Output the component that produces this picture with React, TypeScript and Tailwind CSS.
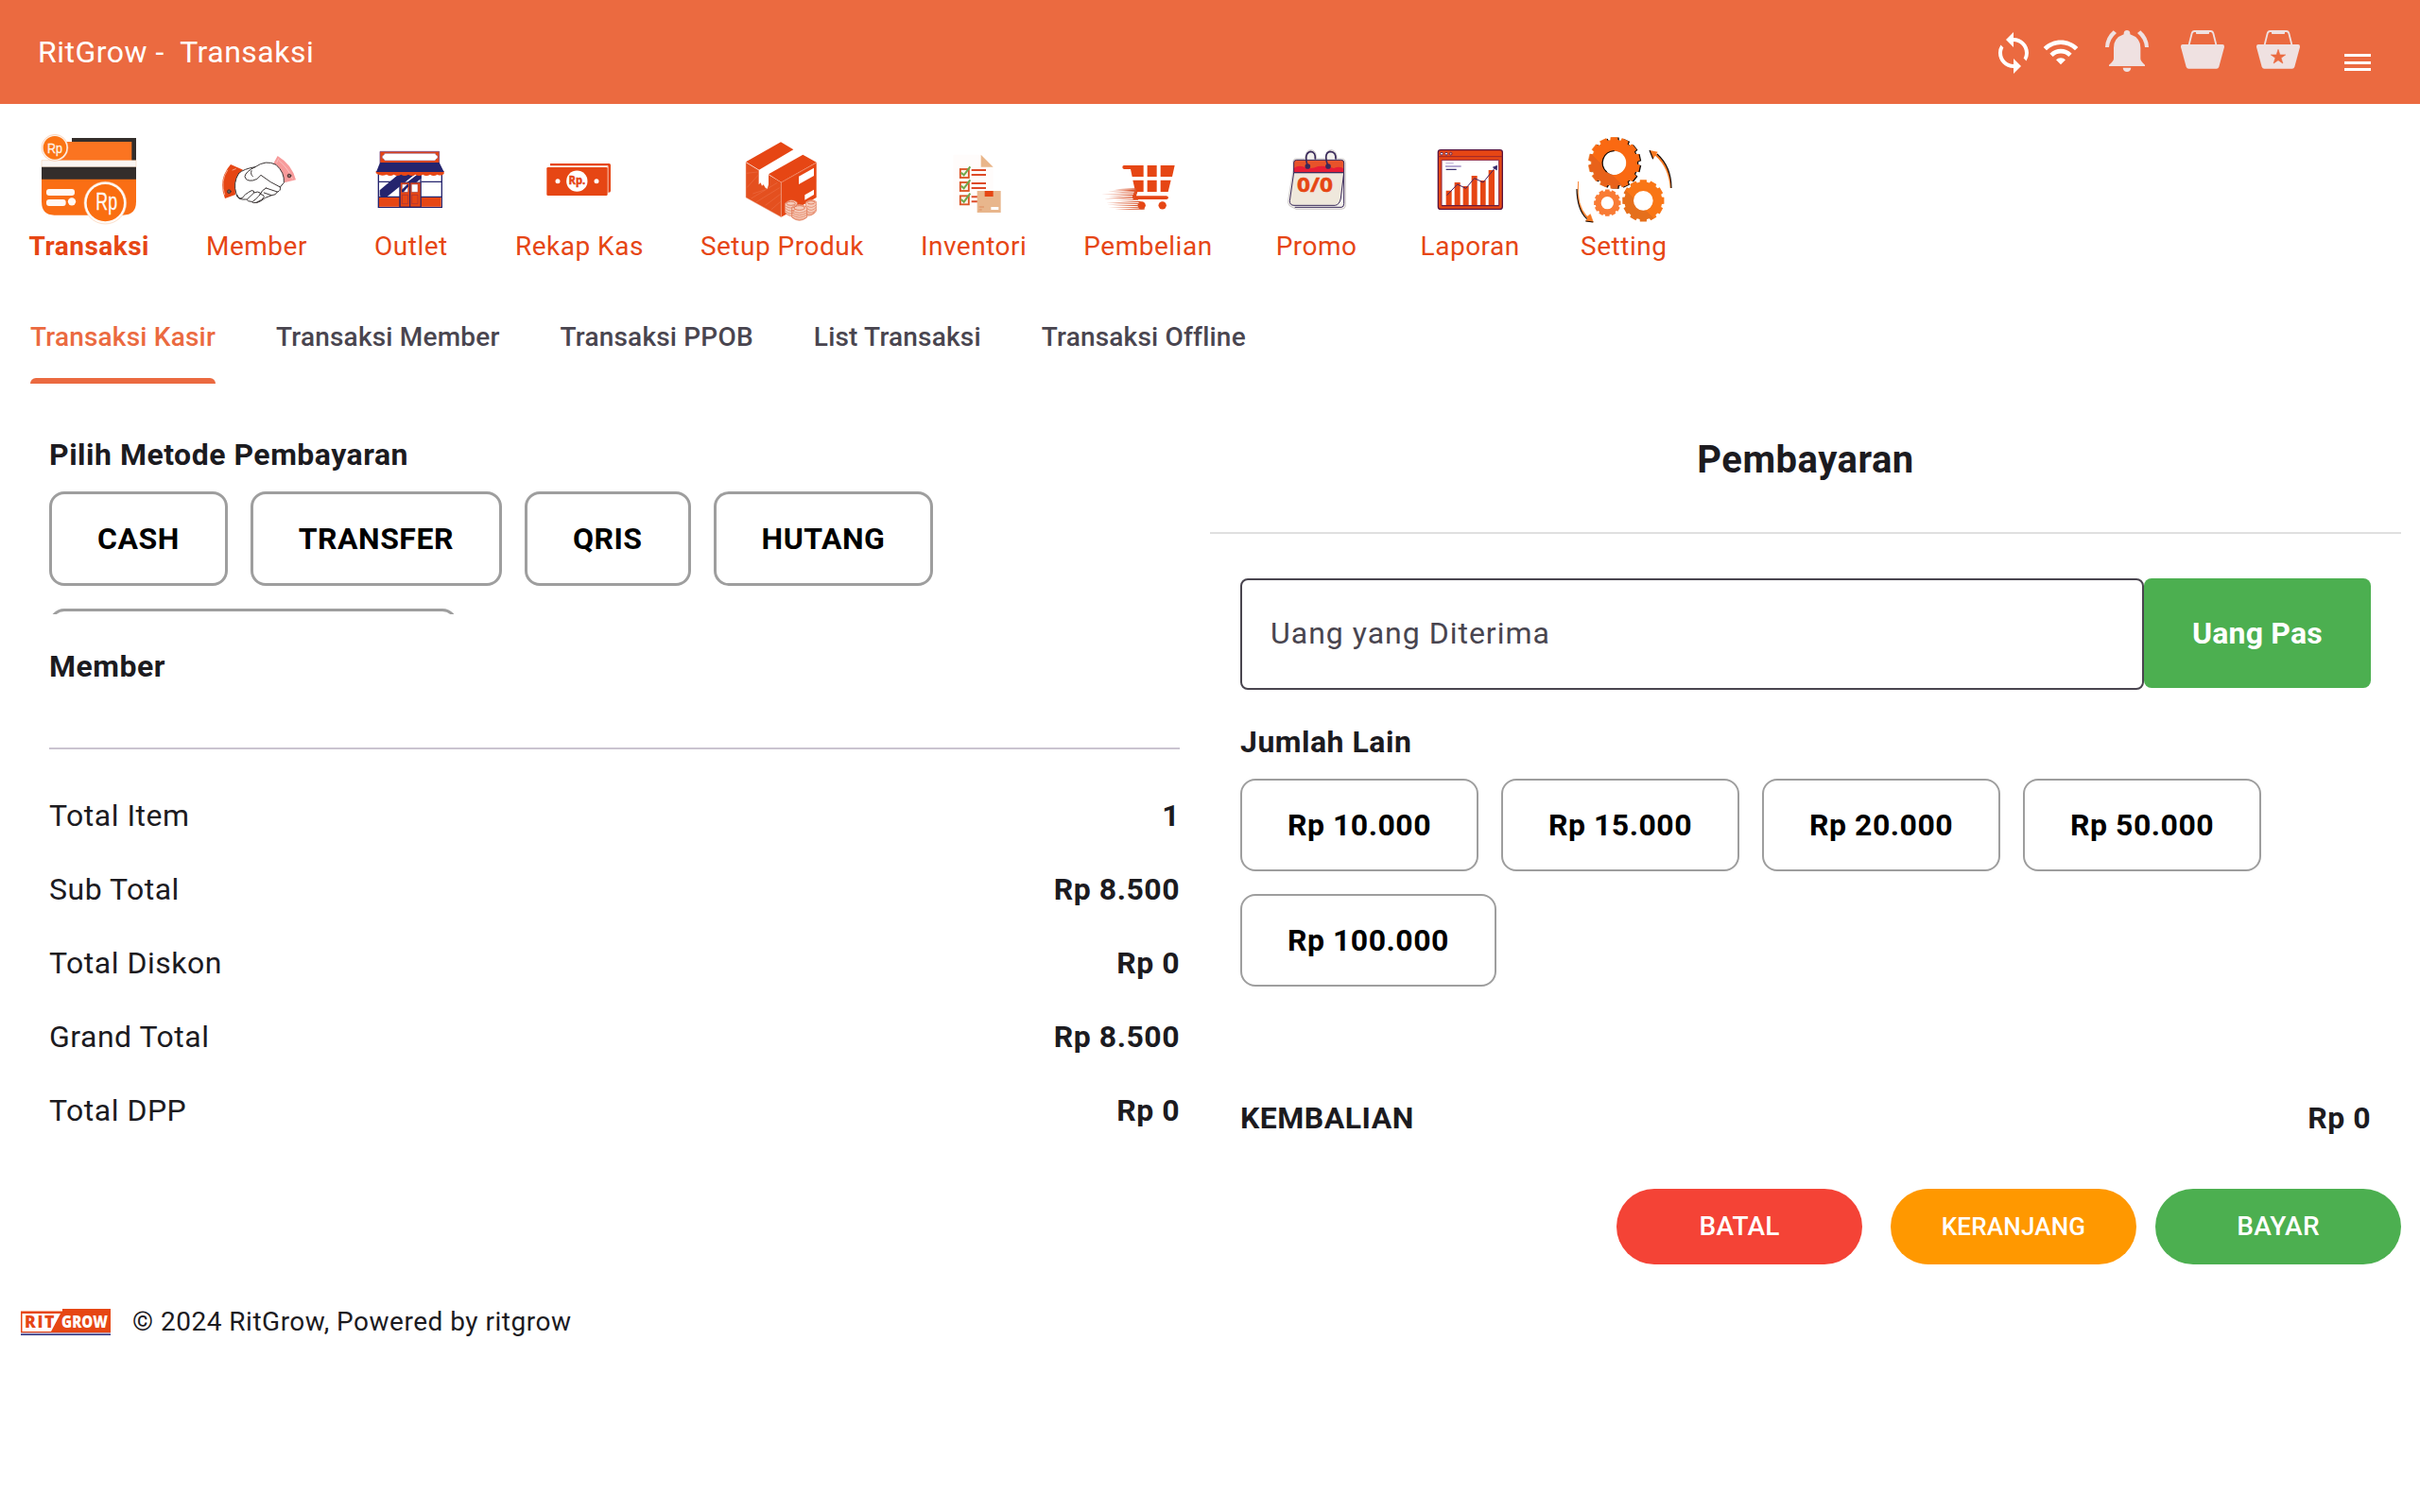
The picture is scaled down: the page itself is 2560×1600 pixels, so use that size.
import React from 'react';
import { MdSync, MdWifi } from 'react-icons/md';

const RED = '#E64614';
const NAVY = '#24246E';

function IconTransaksi() {
  return (
    <svg viewBox="72 30 300 300" className="size-[100px] overflow-visible tracking-normal">
      <path d="M168 48H372V120H168z" fill="#332D2B" />
      <path d="M110 60H358V122H110z" fill="#FB7421" />
      <path d="M72 119H372V140H72z" fill="#FBF6F3" stroke="#F3C9A8" strokeWidth="1.5" />
      <path d="M72 141H372V250Q372 293 330 293H112Q72 293 72 250z" fill="#FA6E14" />
      <path d="M72 140H372V179H72z" fill="#332D2B" />
      <circle cx="114" cy="79" r="42" fill="#FDF3EC" stroke="#F6B98E" strokeWidth="1.5" />
      <circle cx="114" cy="79" r="37" fill="#FB7414" />
      <text x="114" y="95" textAnchor="middle" fontFamily="Liberation Sans" fontSize="44" textLength="48" lengthAdjust="spacingAndGlyphs" fill="#FFF3E8" stroke="#FFF3E8">Rp</text>
      <rect x="87" y="210" width="90" height="21" rx="9" fill="#FFF9F5" />
      <rect x="87" y="243" width="62" height="21" rx="9" fill="#FFF9F5" />
      <circle cx="168" cy="250" r="12.5" fill="#FFF9F5" />
      <circle cx="274" cy="254" r="67" fill="#FFF9F5" stroke="#F8C6A1" strokeWidth="1.5" />
      <circle cx="274" cy="254" r="59" fill="#FA6E10" />
      <text x="278" y="276" textAnchor="middle" fontFamily="Liberation Sans" fontSize="76" textLength="68" lengthAdjust="spacingAndGlyphs" fill="#FFF9F5" stroke="#FFF9F5">Rp</text>
    </svg>
  );
}

function IconMember() {
  return (
    <svg viewBox="605 30 300 300" className="size-[100px]" strokeLinecap="round" strokeLinejoin="round">
      <path d="M823 105Q868 132 881 181L844 190Q842 158 808 132z" fill="#F79A9A" />
      <path d="M828 120Q858 145 870 178M820 126L826 114" fill="none" stroke="#FBD0D0" strokeWidth="2" />
      <path d="M674 132L713 149Q686 172 689 228L656 240Q632 180 674 132z" fill={RED} />
      <path d="M664 150Q640 185 655 228M680 150L690 146" fill="none" stroke="#F7B8A0" strokeWidth="2.5" />
      <path d="M700 160Q715 146 752 140Q786 116 818 133Q846 158 843 190L831 204Q834 216 822 219Q818 230 804 230L784 238Q770 250 758 253Q744 256 740 250Q728 250 724 243Q694 246 692 226Q680 190 700 160z" fill="#fff" stroke="#3A3434" strokeWidth="3" />
      <path d="M752 140Q722 154 719 170Q722 186 744 183Q758 182 770 166Q800 190 831 204M786 207L822 219M780 222L804 230M740 152Q736 164 744 170M694 228Q700 244 712 238Q716 228 740 215Q750 214 748 222L726 243M748 222Q760 216 768 222Q770 230 744 250M768 226Q782 228 780 236Q776 244 756 253M768 226Q772 214 786 207" fill="none" stroke="#3A3434" strokeWidth="3" />
      <circle cx="669" cy="218" r="5.5" fill="#6B6260" stroke="#3A2A28" strokeWidth="2.5" />
      <circle cx="860" cy="168" r="5.5" fill="#8B6B6A" stroke="#3A2A28" strokeWidth="2.5" />
    </svg>
  );
}

function IconOutlet() {
  return (
    <svg viewBox="1096 30 300 300" className="size-[100px]">
      <path d="M1147 91H1335V128H1147z" fill={RED} stroke="#7A4A86" strokeWidth="2.5" />
      <path d="M1162 97H1322Q1324 103 1330 105V112Q1324 114 1322 120H1162Q1160 114 1154 112V105Q1160 103 1162 97z" fill="#fff" stroke="#7A4A86" strokeWidth="1.5" />
      <path d="M1142 160H1343V268H1142z" fill="#fff" stroke={NAVY} strokeWidth="4" />
      <path d="M1210 160H1260L1146 232V214z" fill={NAVY} />
      <path d="M1228 160H1262L1170 234H1148V218z" fill={NAVY} />
      <path d="M1268 162H1278V176L1210 232V206z" fill={NAVY} />
      <path d="M1144 236H1341V266H1144z" fill={RED} />
      <path d="M1142 235H1343M1142 187H1210M1277 187H1343" stroke={NAVY} strokeWidth="3.5" />
      <path d="M1276 162V268M1210 162V268" stroke={NAVY} strokeWidth="4" />
      <path d="M1211 189H1276V267H1211z" fill={RED} stroke={NAVY} strokeWidth="2.5" />
      <path d="M1217 195H1236V220H1217zM1247 195H1267V220H1247z" fill="#fff" stroke="#8A3A4A" strokeWidth="1.5" />
      <path d="M1216 220V212L1234 195H1237V202L1222 220z" fill={NAVY} />
      <path d="M1217 229H1236V257H1217zM1248 229H1267V257H1248z" fill="none" stroke="#8A2A4A" strokeWidth="1.5" />
      <path d="M1242 190V268" stroke={NAVY} strokeWidth="3.5" />
      <path d="M1134 153H1350V162Q1340 170 1329 164Q1317 172 1306 164Q1294 172 1283 164Q1271 172 1260 164Q1248 172 1237 164Q1225 172 1214 164Q1202 172 1191 164Q1179 172 1168 164Q1150 172 1134 160z" fill={RED} />
      <path d="M1147 126H1335L1350 156H1135z" fill={NAVY} />
    </svg>
  );
}

function IconRekap() {
  return (
    <svg viewBox="189 30 300 300" className="size-[100px] tracking-normal">
      <path d="M246 129H433Q438 129 438 134V216Q438 221 432 221H428V138H246z" fill={RED} />
      <path d="M246 137H429V222" stroke="#FBDDD2" strokeWidth="3" fill="none" />
      <rect x="235" y="141" width="193" height="90" rx="4" fill={RED} />
      <circle cx="331" cy="185" r="33.5" fill="#fff" />
      <circle cx="270" cy="185" r="7.5" fill="#fff" />
      <circle cx="393" cy="185" r="7.5" fill="#fff" />
      <text x="331" y="196" textAnchor="middle" fontFamily="Open Sans" fontWeight="700" fontSize="36" textLength="53" lengthAdjust="spacingAndGlyphs" fill={RED} stroke={RED} strokeWidth="1.5">Rp.</text>
    </svg>
  );
}

function IconSetup() {
  return (
    <svg viewBox="832 30 300 300" className="size-[100px]">
      <path d="M868 125L980 61L1092 125V237L980 299L868 237z" fill="#fff" />
      <path d="M868 124L979 61L1019 85L910 149z" fill={RED} />
      <path d="M940 163L1049 101L1092 125L980 188z" fill={RED} />
      <path d="M868 126L909 151V196L915 190L919 200L924 196L930 206L936 210L940 196V165L980 189V299L868 237z" fill="#E4501F" />
      <path d="M980 188L1092 126V237L980 299z" fill={RED} />
      <path d="M868 124V237L980 299V188" fill="none" stroke="#F0B49E" strokeWidth="1.5" />
      <path d="M980 190L1092 127" stroke="#F0906E" strokeWidth="1.5" />
      <path d="M870 160L905 156M872 205L908 165M885 240L968 190M900 252L975 206M930 262L978 226M948 276L978 250M890 225L930 212" stroke="#EF7A55" strokeWidth="1.3" />
      <path d="M1036 170L1084 143V168L1036 195z" fill="#fff" />
      <path d="M1055 229L1084 212V228L1055 245z" fill="#fff" />
      <g fill="#F6CDBD" stroke="#E0704A" strokeWidth="2">
        <path d="M992 256Q1010 236 1031 252L1030 290Q1008 304 992 284z" />
        <path d="M1058 252Q1072 238 1091 250V280Q1078 298 1060 294z" />
        <path d="M1014 268Q1036 250 1062 268V300Q1038 320 1014 300z" />
        <path d="M994 264Q1012 278 1030 262M994 272Q1010 286 1026 274M994 280Q1008 294 1020 284M1062 264Q1078 274 1091 260M1062 272Q1078 284 1091 268M1062 281Q1078 292 1091 276M1062 290Q1076 296 1088 284M1014 278Q1038 294 1062 278M1014 285Q1038 301 1062 285M1014 292Q1038 308 1062 292M1014 299Q1038 315 1062 299" fill="none" />
      </g>
      <ellipse cx="1011" cy="256" rx="14" ry="6" fill="none" stroke="#DE6A45" strokeWidth="2.5" />
      <ellipse cx="1038" cy="270" rx="17" ry="7" fill="none" stroke="#DE6A45" strokeWidth="2.5" />
      <ellipse cx="1075" cy="253" rx="12" ry="5" fill="none" stroke="#DE6A45" strokeWidth="2.5" />
    </svg>
  );
}

function IconInventori() {
  return (
    <svg viewBox="58 30 300 300" className="size-[100px]">
      <path d="M143 101H231L270 140V276H143z" fill="#FFFCFB" />
      <path d="M231 101L270 140H231z" fill="#E9B68A" />
      {[0, 42, 85].map((dy) => (
        <g key={dy} transform={`translate(0 ${dy})`}>
          <rect x="165.500" y="147" width="27" height="27" fill="#FDF3EA" stroke="#DB5425" strokeWidth="5.500" />
          <path d="M168 158L177 166L197 139" fill="none" stroke="#6FA84B" strokeWidth="6" />
          <path d="M201 150H247M201 165H247" stroke="#DD4A28" strokeWidth="6" />
        </g>
      ))}
      <path d="M219 216H294V285H219z" fill="#E8B68C" />
      <path d="M243 216H270V234H243z" fill={RED} />
      <path d="M225 267H241M225 276H234" stroke="#DE8A5C" strokeWidth="3" />
      <path d="M263 267H287V276H263z" fill="#fff" />
    </svg>
  );
}

function IconPembelian() {
  return (
    <svg viewBox="610 30 300 300" className="size-[100px]">
      <path d="M685 135H747V171H711L706 147H685Q680 146 680 141Q680 135 685 135zM759 135H789V171H759zM801 135H846L838 171H801zM713 182H747V219H728L724 232H820Q826 233 826 238Q825 243 820 243H716Q710 240 712 233L720 213zM759 182H789V219H759zM801 182H834L825 219H801z" fill={RED} />
      <circle cx="741" cy="262" r="12.500" fill={RED} />
      <circle cx="807" cy="262" r="12.500" fill={RED} />
      <g fill="#D9572F">
        <path d="M656 211L724 208V212z" />
        <path d="M634 217L724 212V216z" />
        <path d="M648 221L724 216V220z" />
        <path d="M614 227L724 223V226z" />
        <path d="M636 233L716 228V232z" />
        <path d="M622 241L720 235V239z" />
        <path d="M656 246L730 242V245z" />
        <path d="M628 254L738 248V252z" />
        <path d="M630 259L736 255V258z" />
        <path d="M650 264L736 260V264z" />
        <path d="M636 270L736 266V269z" />
        <path d="M656 275L750 271V275z" />
      </g>
    </svg>
  );
}

function IconPromo() {
  return (
    <svg viewBox="66 30 300 300" className="size-[100px] tracking-normal">
      <path d="M146 114H178Q180 86 198 86Q216 88 214 114H243Q244 86 262 86Q280 88 280 114H298Q307 116 307 126V264Q306 274 294 274H150L130 264Q122 256 126 240L141 150V120z" fill="#F3F0EC" stroke="#B9B4B4" strokeWidth="2" />
      <path d="M143 158L130 248Q130 262 144 262H274Q288 260 292 240L302 158z" fill="#EFE8DC" stroke="#39295A" strokeWidth="3" />
      <path d="M146 268H294Q302 268 302 256V160" fill="none" stroke="#39295A" strokeWidth="3" />
      <path d="M143 156V126Q143 118 152 118H293Q302 118 302 126V156z" fill="#E8532A" />
      <path d="M143 156V144Q160 132 180 142Q200 148 220 138Q250 136 270 144Q290 136 302 146V156z" fill="#E71D36" />
      <path d="M143 158V126Q143 118 152 118H293Q302 118 302 126V158z" fill="none" stroke="#39295A" strokeWidth="3" />
      <circle cx="187" cy="138" r="8.500" fill="#39295A" />
      <circle cx="252" cy="138" r="8.500" fill="#39295A" />
      <path d="M187 138Q174 96 196 91Q213 92 211 116M252 138Q236 96 258 91Q278 92 276 116" fill="none" stroke="#39295A" strokeWidth="5" />
      <text x="210" y="218" textAnchor="middle" fontFamily="Open Sans" fontWeight="700" fontSize="62" textLength="114" lengthAdjust="spacingAndGlyphs" fill={RED} stroke={RED} strokeWidth="1.500">0/0</text>
    </svg>
  );
}

function IconLaporan() {
  return (
    <svg viewBox="553 30 300 300" className="size-[100px]">
      <rect x="602" y="86" width="204" height="188" rx="8" fill={RED} stroke="#5A1540" strokeWidth="4" />
      <path d="M602 107H806" stroke="#8A1F30" strokeWidth="2.500" />
      <path d="M613 118H795V263H613z" fill="#fff" stroke="#8A2440" strokeWidth="3" />
      <g fill="#fff" stroke="#4A1C55" strokeWidth="2.500">
        <circle cx="613" cy="98" r="4" />
        <circle cx="628" cy="98" r="4" />
        <circle cx="642" cy="98" r="4" fill="#F29A7A" />
      </g>
      <path d="M626 128H651" stroke="#C9BEDD" strokeWidth="4" />
      <path d="M625 138H675" stroke="#A99BCB" strokeWidth="5" />
      <path d="M627 148H660" stroke="#2D2366" strokeWidth="3.500" />
      <path d="M627 215H645V263H627zM654 189H672V263H654zM681 201H699V263H681zM708 168H726V263H708zM736 183H753V263H736zM762 150H781V263H762z" fill={RED} />
      <path d="M630 230L663 195L690 208L717 176L745 189L784 141" fill="none" stroke="#43205F" strokeWidth="3" />
      <path d="M776 141L789 136L788 150z" fill="#2D2366" stroke="#2D2366" strokeWidth="2" />
      <path d="M613 263H795" stroke="#5A1540" strokeWidth="3" />
    </svg>
  );
}

function gearPath(cx: number, cy: number, rOut: number, rIn: number, hole: number, teeth: number) {
  const step = (Math.PI * 2) / teeth;
  let d = '';
  for (let i = 0; i < teeth; i++) {
    const a = i * step - Math.PI / 2;
    [[-0.36, rIn], [-0.3, rOut], [0.3, rOut], [0.36, rIn]].forEach(([o, r], j) => {
      const x = (cx + Math.cos(a + o * step) * r).toFixed(1);
      const y = (cy + Math.sin(a + o * step) * r).toFixed(1);
      d += `${i === 0 && j === 0 ? 'M' : 'L'}${x} ${y}`;
    });
  }
  return `${d}zM${cx - hole} ${cy}a${hole} ${hole} 0 1 0 ${hole * 2} 0a${hole} ${hole} 0 1 0 ${-hole * 2} 0z`;
}

function IconSetting() {
  const big = gearPath(1160, 127, 82, 73, 38, 14);
  const mid = gearPath(1252, 247, 67, 60, 31, 12);
  const small = gearPath(1138, 254, 43, 38, 20, 12);
  return (
    <svg viewBox="1041 30 300 300" className="size-[100px] overflow-visible" fillRule="evenodd">
      <defs>
        <linearGradient id="gearBig" x1="0" y1="1" x2="1" y2="0">
          <stop offset="0.36" stopColor="#E8621A" />
          <stop offset="0.36" stopColor="#FA6912" />
        </linearGradient>
        <linearGradient id="gearMid" x1="0" y1="1" x2="1" y2="0">
          <stop offset="0.42" stopColor="#E56F1B" />
          <stop offset="0.42" stopColor="#F97616" />
        </linearGradient>
      </defs>
      <path d={big} fill="#150A04" transform="translate(4 1)" />
      <path d={big} fill="#F3B57A" transform="translate(-2 0)" />
      <path d={big} fill="url(#gearBig)" />
      <circle cx="1160" cy="127" r="37" fill="#fff" />
      <path d="M1160 89A38 38 0 0 0 1136 156" fill="none" stroke="#150A04" strokeWidth="4" />
      <path d={mid} fill="url(#gearMid)" />
      <path d={small} fill="#F97B34" />
      <path d="M1294 98Q1340 138 1341 207H1337Q1333 142 1290 104L1283 115L1272 87L1298 92z" fill="#F97A22" />
      <path d="M1296 99Q1341 140 1341 207M1272 87L1283 115" fill="none" stroke="#150A04" strokeWidth="3.500" />
      <path d="M1046 186Q1038 260 1074 298L1084 290L1093 315L1070 311L1075 304Q1036 270 1046 186z" fill="#F97A22" stroke="#F97A22" strokeWidth="2" />
      <path d="M1041 210Q1042 276 1073 305M1069 312L1093 315" fill="none" stroke="#150A04" strokeWidth="3.500" />
    </svg>
  );
}

function IconBell() {
  return (
    <svg viewBox="435 90 150 150" className="size-[50px]" fill="#EFE1E1">
      <path d="M500 109V105Q501 96 510 96Q519 96 520 105V109Q553 120 553 152V186Q553 194 567 206V210H453V206Q468 194 468 186V152Q468 120 500 109z" />
      <path d="M497 215H523Q521 228 510 228Q499 228 497 215z" />
      <path d="M467 97L477 105Q455 124 453 150H441Q442 118 467 97zM553 97L543 105Q565 124 567 150H579Q578 118 553 97z" />
    </svg>
  );
}

function IconBasket({ star = false }: { star?: boolean }) {
  return (
    <svg viewBox="675 90 150 150" className="size-[50px]">
      <path d="M707 142L716 106Q718 99 724 99H776Q782 99 784 106L793 142" fill="none" stroke="#EFE1E1" strokeWidth="5.500" />
      <rect x="729" y="96" width="42" height="12" rx="2" fill="#EFE1E1" />
      <path d="M686 141H814Q820 142 819 149L802 212Q800 218 794 218H706Q700 218 698 212L681 149Q680 142 686 141z" fill="#EFE1E1" />
      {star && (
        <path
          d="M750 157L755.500 174H773L759 184L764.500 201L750 191L735.500 201L741 184L727 174H744.500z"
          fill="#EB6A40"
          stroke="#EB6A40"
          strokeWidth="2"
          strokeLinejoin="round"
        />
      )}
    </svg>
  );
}

function Logo() {
  return (
    <svg viewBox="0 0 95 28" className="h-7 w-[95px] overflow-visible tracking-normal">
      <path d="M0 2.500H44V0H95V25.500H0z" fill={RED} />
      <path d="M1.500 5H42L32 24H1.500z" fill="#fff" />
      <path d="M0 25.700H95" stroke="#B9A9C9" strokeWidth="1" />
      <path d="M0 27.200H95" stroke="#232A7C" strokeWidth="1.600" />
      <g fontFamily="Open Sans" fontWeight="800" fontSize="17.500">
        <text x="4" y="20" fill={RED}>R</text>
        <text x="17.500" y="20" fill={RED}>I</text>
        <text x="25" y="20" fill={RED} textLength="10.500" lengthAdjust="spacingAndGlyphs">T</text>
        <text x="43" y="20" fill="#fff" textLength="49" lengthAdjust="spacingAndGlyphs">GROW</text>
      </g>
    </svg>
  );
}

const NAV = [
  { label: 'Transaksi', Icon: IconTransaksi, active: true },
  { label: 'Member', Icon: IconMember },
  { label: 'Outlet', Icon: IconOutlet },
  { label: 'Rekap Kas', Icon: IconRekap },
  { label: 'Setup Produk', Icon: IconSetup },
  { label: 'Inventori', Icon: IconInventori },
  { label: 'Pembelian', Icon: IconPembelian },
  { label: 'Promo', Icon: IconPromo },
  { label: 'Laporan', Icon: IconLaporan },
  { label: 'Setting', Icon: IconSetting },
];

const TABS = ['Transaksi Kasir', 'Transaksi Member', 'Transaksi PPOB', 'List Transaksi', 'Transaksi Offline'];
const METHODS = ['CASH', 'TRANSFER', 'QRIS', 'HUTANG'];
const TOTALS = [
  ['Total Item', '1'],
  ['Sub Total', 'Rp 8.500'],
  ['Total Diskon', 'Rp 0'],
  ['Grand Total', 'Rp 8.500'],
  ['Total DPP', 'Rp 0'],
];
const AMOUNTS = ['Rp 10.000', 'Rp 15.000', 'Rp 20.000', 'Rp 50.000', 'Rp 100.000'];

export default function App() {
  return (
    <div className="min-h-[1600px] w-[2560px] overflow-hidden bg-white font-['Roboto',sans-serif] text-[32px]/[48px] tracking-[0.5px] text-[#1c1b1f]">
      <header className="flex h-[110px] items-center bg-[#eb6a40] pr-[52px] pl-10 text-white">
        <h1 className="mr-auto whitespace-pre">{'RitGrow -  Transaksi'}</h1>
        <MdSync className="mt-0.5 mr-1.5 size-12" />
        <MdWifi className="mr-[25px] size-10" />
        <div className="mr-[45px] flex gap-[30px]">
          <IconBell />
          <IconBasket />
          <IconBasket star />
        </div>
        <div className="mt-[22px] flex w-7 flex-col gap-[4.500px]">
          <span className="h-[3px] bg-white" />
          <span className="h-[3px] bg-white" />
          <span className="h-[3px] bg-white" />
        </div>
      </header>

      <nav className="flex gap-[60px] pt-[30px] pl-[30.500px] text-[28px]/[40px] text-[#e64614]">
        {NAV.map(({ label, Icon, active }) => (
          <a key={label} className="flex min-w-[100px] flex-col items-center">
            <Icon />
            <span className={active ? 'mt-px font-bold' : 'mt-px'}>{label}</span>
          </a>
        ))}
      </nav>

      <div className="mt-[25px] flex h-[100px] gap-16 pl-8 text-[28px]/[40px] font-medium tracking-[0.2px] text-[#49454f]">
        {TABS.map((tab, i) => (
          <button key={tab} className={i === 0 ? 'relative pt-0.5 text-[#eb6a40]' : 'relative pt-0.5'}>
            {tab}
            {i === 0 && <span className="absolute inset-x-0 bottom-0 h-1.5 rounded-t-md bg-[#eb6a40]" />}
          </button>
        ))}
      </div>

      <main className="grid grid-cols-2">
        <section className="pt-[51px] pr-8 pl-[52px]">
          <h2 className="font-bold">Pilih Metode Pembayaran</h2>
          <div className="mt-[15px] flex h-[130px] flex-wrap content-start gap-6 overflow-hidden font-bold text-black">
            {METHODS.map((m) => (
              <button key={m} className="h-[100px] rounded-2xl border-3 border-[#9e9e9e] px-12">
                {m}
              </button>
            ))}
            <div className="h-[100px] w-[432px] rounded-2xl border-3 border-[#9e9e9e]" />
          </div>
          <h2 className="mt-[31px] font-bold">Member</h2>
          <hr className="mt-[62px] mb-[31px] border-t-2 border-[#cac4d0]" />
          {TOTALS.map(([label, value]) => (
            <div key={label} className="flex h-[78px] items-center justify-between">
              <span>{label}</span>
              <span className="font-bold">{value}</span>
            </div>
          ))}
        </section>

        <section className="pt-[51px]">
          <h2 className="mr-5 text-center text-[40px]/[60px] font-bold">Pembayaran</h2>
          <hr className="mt-[46px] mr-5 border-t-2 border-[#e0e0e0]" />
          <div className="mt-[47px] mr-[52px] ml-8 flex items-start">
            <div className="flex h-[118px] flex-1 items-center rounded-lg border-2 border-[#49454f] px-[30px] pb-0.5 tracking-[1px] text-[#49454f]">
              Uang yang Diterima
            </div>
            <button className="h-[116px] w-60 rounded-lg bg-[#4caf50] font-bold tracking-[0.2px] text-white">Uang Pas</button>
          </div>
          <div className="mt-[31px] mr-[52px] ml-8">
            <h3 className="font-bold">Jumlah Lain</h3>
            <div className="mt-[15px] flex flex-wrap gap-6 font-bold text-black">
              {AMOUNTS.map((a) => (
                <button key={a} className="h-[98px] rounded-2xl border-2 border-[#9e9e9e] px-12">
                  {a}
                </button>
              ))}
            </div>
            <div className="mt-[115px] flex justify-between font-bold">
              <span>KEMBALIAN</span>
              <span>Rp 0</span>
            </div>
          </div>
          <div className="mt-[50.500px] mr-5 flex justify-end text-[28px]/[40px] font-medium tracking-[0.2px] text-white">
            <button className="mr-[30px] h-20 w-[260px] rounded-full bg-[#f44336] pt-px">BATAL</button>
            <button className="mr-5 h-20 w-[260px] rounded-full bg-[#ff9800] pt-px text-[26px]">KERANJANG</button>
            <button className="h-20 w-[260px] rounded-full bg-[#4caf50] pt-px">BAYAR</button>
          </div>
        </section>
      </main>

      <footer className="mt-[41.500px] flex items-center pl-[22px] text-[28px]/[40px]">
        <Logo />
        <span className="ml-[23px]">© 2024 RitGrow, Powered by ritgrow</span>
      </footer>
    </div>
  );
}
